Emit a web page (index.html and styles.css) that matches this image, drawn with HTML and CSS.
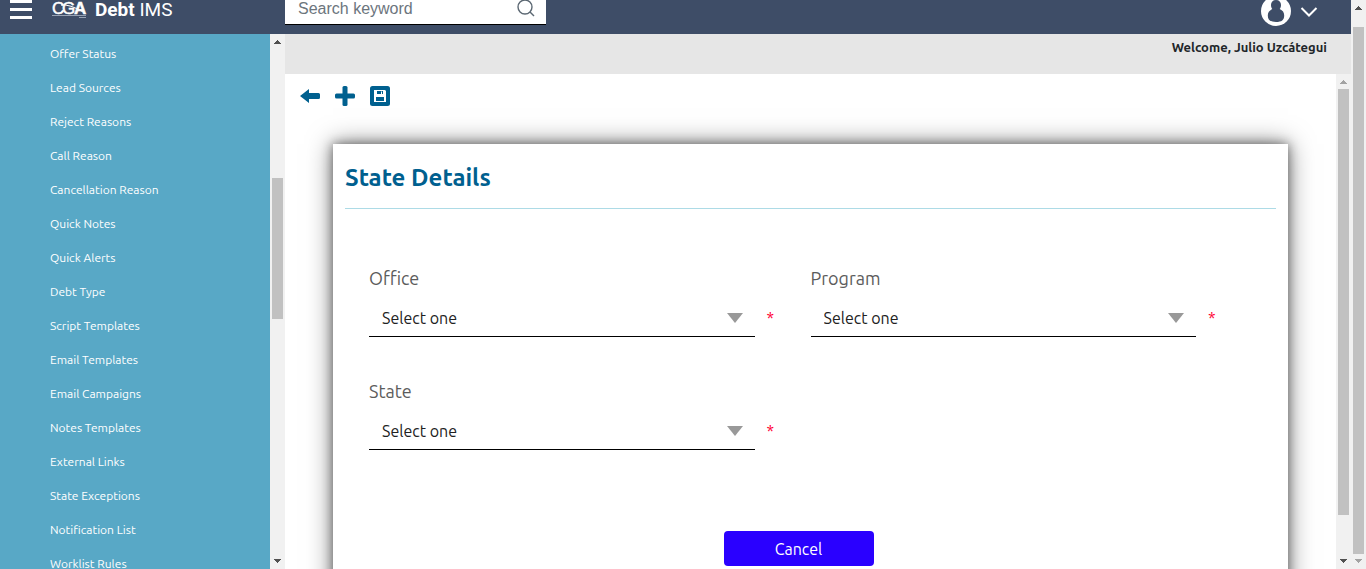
FILE: index.html
```html
<!DOCTYPE html>
<html lang="en">
<head>
<meta charset="utf-8">
<meta name="viewport" content="width=device-width, initial-scale=1">
<title>Debt IMS - State Details</title>
<link rel="stylesheet" href="styles.css">
</head>
<body>
<div class="app">
  <header class="topbar">
    <div class="brand">
      <button class="icon-button" type="button" aria-label="Menu">
        <svg width="22" height="20" viewBox="0 0 22 20"><path d="M0 0h22v3H0zM0 8h22v3H0zM0 16h22v3H0z" fill="#fff"/></svg>
      </button>
      <svg class="logo" width="36" height="20" viewBox="0 0 36 20" fill="#fff">
        <g font-family="Liberation Sans, sans-serif" font-size="17" stroke="#fff" stroke-width=".5">
          <text x="0" y="14">C</text><text x="10" y="14">G</text><text x="22" y="14" font-weight="bold">A</text>
        </g>
        <path d="M9 5Q18 4 31 12" fill="none" stroke="#fff"/>
        <path d="M0 15.500h34" stroke="#97a2b4"/>
        <path d="M27 17.500h7" stroke="#97a2b4"/>
      </svg>
      <span class="product"><strong>Debt</strong> IMS</span>
    </div>
    <form class="search">
      <input type="text" placeholder="Search keyword" aria-label="Search keyword">
      <button class="icon-button" type="button" aria-label="Search">
        <svg width="18" height="18" viewBox="0 0 18 18" fill="none" stroke="#5c6873" stroke-width="1.4"><circle cx="8" cy="7" r="7"/><path d="M13 12l4 4"/></svg>
      </button>
    </form>
    <button class="icon-button account" type="button" aria-label="Account">
      <svg width="30" height="30" viewBox="0 0 30 30"><circle cx="15" cy="15" r="15" fill="#fff"/><path d="M15 4c3.200 0 5 2 5 5 0 1.800-.500 3-1.300 4 3 1.300 4.500 3.500 4.500 6.500 0 4.500-2.500 6.500-8.200 6.500s-8.200-2-8.200-6.500c0-3 1.500-5.200 4.500-6.500-.8-1-1.300-2.200-1.300-4 0-3 1.800-5 5-5z" fill="#3e4d67"/></svg>
      <svg width="18" height="12" viewBox="0 0 18 12" fill="none" stroke="#fff" stroke-width="2"><path d="M1.500 3L9 10.500 16.500 3"/></svg>
    </button>
  </header>
  <div class="workspace">
    <nav class="sidebar" aria-label="Settings">
      <a href="#">Offer Status</a>
      <a href="#">Lead Sources</a>
      <a href="#">Reject Reasons</a>
      <a href="#">Call Reason</a>
      <a href="#">Cancellation Reason</a>
      <a href="#">Quick Notes</a>
      <a href="#">Quick Alerts</a>
      <a href="#">Debt Type</a>
      <a href="#">Script Templates</a>
      <a href="#">Email Templates</a>
      <a href="#">Email Campaigns</a>
      <a href="#">Notes Templates</a>
      <a href="#">External Links</a>
      <a href="#">State Exceptions</a>
      <a href="#">Notification List</a>
      <a href="#">Worklist Rules</a>
    </nav>
    <div class="scrollbar" aria-hidden="true">
      <svg class="arrow" viewBox="0 0 7 4"><path d="M3 0h1v1h1v1h1v1h1v1H0V3h1V2h1V1h1z"/></svg>
      <div class="track track-nav"><div class="thumb"></div></div>
      <svg class="arrow" viewBox="0 0 7 4"><path d="M0 0h7v1H6v1H5v1H4v1H3V3H2V2H1V1H0z"/></svg>
    </div>
    <main class="main">
      <div class="welcome">Welcome, Julio Uzcátegui</div>
      <div class="pane">
        <div class="content">
          <div class="toolbar">
            <button class="icon-button" type="button" aria-label="Back"><svg width="20" height="20" viewBox="0 0 20 20" fill="#00608f"><path d="M0 10L9 3v4h9.500q1.500 0 1.500 1.500v3q0 1.500-1.500 1.500H9v4z"/></svg></button>
            <button class="icon-button" type="button" aria-label="Add"><svg width="20" height="20" viewBox="0 0 20 20" fill="#00608f"><rect x="7.500" width="5" height="20" rx="1.500"/><rect y="7.500" width="20" height="5" rx="1.500"/></svg></button>
            <button class="icon-button" type="button" aria-label="Save"><svg width="20" height="20" viewBox="0 0 20 20"><rect width="20" height="20" rx="2.500" fill="#00608f"/><path d="M4 4h11l1 1v11H4z" fill="#fff"/><path d="M7 5h6v3H7zM6 11h8v4H6z" fill="#00608f"/><path d="M11 5.500h1V8h-1z" fill="#fff"/></svg></button>
          </div>
          <section class="card">
            <h1>State Details</h1>
            <form>
              <div class="fields">
                <div class="field">
                  <label for="office">Office</label>
                  <div class="control">
                    <div class="select"><select id="office" required><option>Select one</option></select><svg class="caret" viewBox="0 0 16 10"><path d="M0 0h16L8 10z"/></svg></div>
                    <span class="required">*</span>
                  </div>
                </div>
                <div class="field">
                  <label for="program">Program</label>
                  <div class="control">
                    <div class="select"><select id="program" required><option>Select one</option></select><svg class="caret" viewBox="0 0 16 10"><path d="M0 0h16L8 10z"/></svg></div>
                    <span class="required">*</span>
                  </div>
                </div>
                <div class="field">
                  <label for="state">State</label>
                  <div class="control">
                    <div class="select"><select id="state" required><option>Select one</option></select><svg class="caret" viewBox="0 0 16 10"><path d="M0 0h16L8 10z"/></svg></div>
                    <span class="required">*</span>
                  </div>
                </div>
              </div>
              <div class="actions"><button class="cancel" type="button">Cancel</button></div>
            </form>
          </section>
        </div>
        <div class="scrollbar" aria-hidden="true">
          <svg class="arrow muted" viewBox="0 0 7 4"><path d="M3 0h1v1h1v1h1v1h1v1H0V3h1V2h1V1h1z"/></svg>
          <div class="track track-content"><div class="thumb"></div></div>
          <svg class="arrow" viewBox="0 0 7 4"><path d="M0 0h7v1H6v1H5v1H4v1H3V3H2V2H1V1H0z"/></svg>
        </div>
      </div>
    </main>
  </div>
</div>
<div class="scrollbar" aria-hidden="true">
  <svg class="arrow" viewBox="0 0 7 4"><path d="M3 0h1v1h1v1h1v1h1v1H0V3h1V2h1V1h1z"/></svg>
  <div class="track track-page"><div class="thumb"></div></div>
  <svg class="arrow muted" viewBox="0 0 7 4"><path d="M0 0h7v1H6v1H5v1H4v1H3V3H2V2H1V1H0z"/></svg>
</div>
</body>
</html>
```

FILE: styles.css
```css
* { box-sizing: border-box; }

body {
  margin: 0;
  display: flex;
  height: 100vh;
  overflow: hidden;
  background: #fff;
  color: #212529;
  font-family: Ubuntu, "Noto Sans", sans-serif;
}

.app {
  flex: 1;
  min-width: 0;
  display: flex;
  flex-direction: column;
}

.icon-button {
  display: flex;
  padding: 0;
  border: 0;
  background: none;
}

/* Top bar */
.topbar {
  flex: none;
  display: flex;
  align-items: flex-start;
  height: 34px;
  padding-right: 33px;
  background: #3e4d67;
}

.brand {
  flex: none;
  display: flex;
  align-items: flex-start;
  width: 285px;
  padding-left: 10px;
}

.logo { margin: 0 7px 0 20px; }

.product {
  color: #fff;
  font: 19px/19px Roboto, sans-serif;
}

.search {
  display: flex;
  align-items: flex-start;
  width: 261px;
  height: 25px;
  padding: 0 11px 0 13px;
  border-bottom: 1px solid #000;
  background: #fff;
}

.search input {
  flex: 1;
  min-width: 0;
  height: 17px;
  padding: 0;
  border: 0;
  outline: 0;
  background: none;
  font: 16px/17px "Liberation Sans", sans-serif;
}

.search input::placeholder { color: #6c757d; }

.account {
  align-items: center;
  gap: 9px;
  margin: -4px 0 0 auto;
}

/* Sidebar */
.workspace {
  flex: 1;
  min-height: 0;
  display: flex;
}

.sidebar {
  flex: none;
  width: 270px;
  padding: 3px 0 0 50px;
  overflow: hidden;
  background: #58a8c6;
}

.sidebar a {
  display: block;
  color: #fff;
  font-size: 12px;
  line-height: 34px;
  text-decoration: none;
}

/* Scrollbars */
.scrollbar {
  flex: none;
  display: flex;
  flex-direction: column;
  align-items: center;
  width: 15px;
  padding: 6px 0;
  background: #f1f1f1;
}

.arrow {
  flex: none;
  width: 7px;
  height: 4px;
  fill: #505050;
}

.arrow.muted { fill: #a3a3a3; }

.track {
  flex: 1;
  width: 11px;
  padding: 5px 0;
  display: flex;
  flex-direction: column;
}

.thumb { background: #c1c1c1; }
.track-nav { padding-top: 134px; }
.track-nav .thumb { height: 141px; }
.track-content .thumb { height: 426px; }
.track-page { padding-top: 17px; }
.track-page .thumb { flex: 1; }

/* Main area */
.main {
  flex: 1;
  min-width: 0;
  display: flex;
  flex-direction: column;
}

.welcome {
  flex: none;
  height: 40px;
  padding-right: 24px;
  background: #e6e6e6;
  font-size: 13px;
  font-weight: 700;
  line-height: 27px;
  text-align: right;
}

.pane {
  flex: 1;
  min-height: 0;
  display: flex;
}

.content {
  flex: 1;
  min-width: 0;
  overflow: hidden;
}

.toolbar {
  display: flex;
  gap: 15px;
  padding: 12px 15px 0;
}

.card {
  margin: 38px 48px 0;
  padding: 12px 12px 40px;
  background: #fff;
  box-shadow: 0 0 10px rgba(0, 0, 0, .45), 0 0 24px rgba(0, 0, 0, .5);
}

h1 {
  margin: 0;
  padding-bottom: 9px;
  border-bottom: 1px solid #addbe6;
  color: #00608f;
  font-size: 24px;
  font-weight: 600;
  line-height: 43px;
}

.fields {
  display: grid;
  grid-template-columns: 1fr 1fr;
  row-gap: 41px;
  padding: 56px 24px 0;
}

.field label {
  display: block;
  color: #5c5c5c;
  font-size: 18px;
  line-height: 26px;
}

.control {
  display: flex;
  align-items: center;
  gap: 12px;
  padding-top: 8px;
}

.select {
  position: relative;
  flex: 1;
}

select {
  display: block;
  width: 100%;
  height: 38px;
  padding: 0 36px 0 13px;
  border: 0;
  border-bottom: 1px solid #000;
  border-radius: 0;
  appearance: none;
  background: #fff;
  color: #212121;
  font: 16px Ubuntu, "Noto Sans", sans-serif;
}

.caret {
  position: absolute;
  top: 14px;
  right: 12px;
  width: 16px;
  height: 10px;
  fill: #999;
  pointer-events: none;
}

.required {
  width: 44px;
  color: #f03;
  font-size: 16px;
}

.actions {
  display: flex;
  justify-content: center;
  padding: 81px 24px 0 0;
}

.cancel {
  width: 150px;
  height: 35px;
  border: 0;
  border-radius: 4px;
  background: #2a00ff;
  color: #fff;
  font: 16px Ubuntu, "Noto Sans", sans-serif;
}
```
